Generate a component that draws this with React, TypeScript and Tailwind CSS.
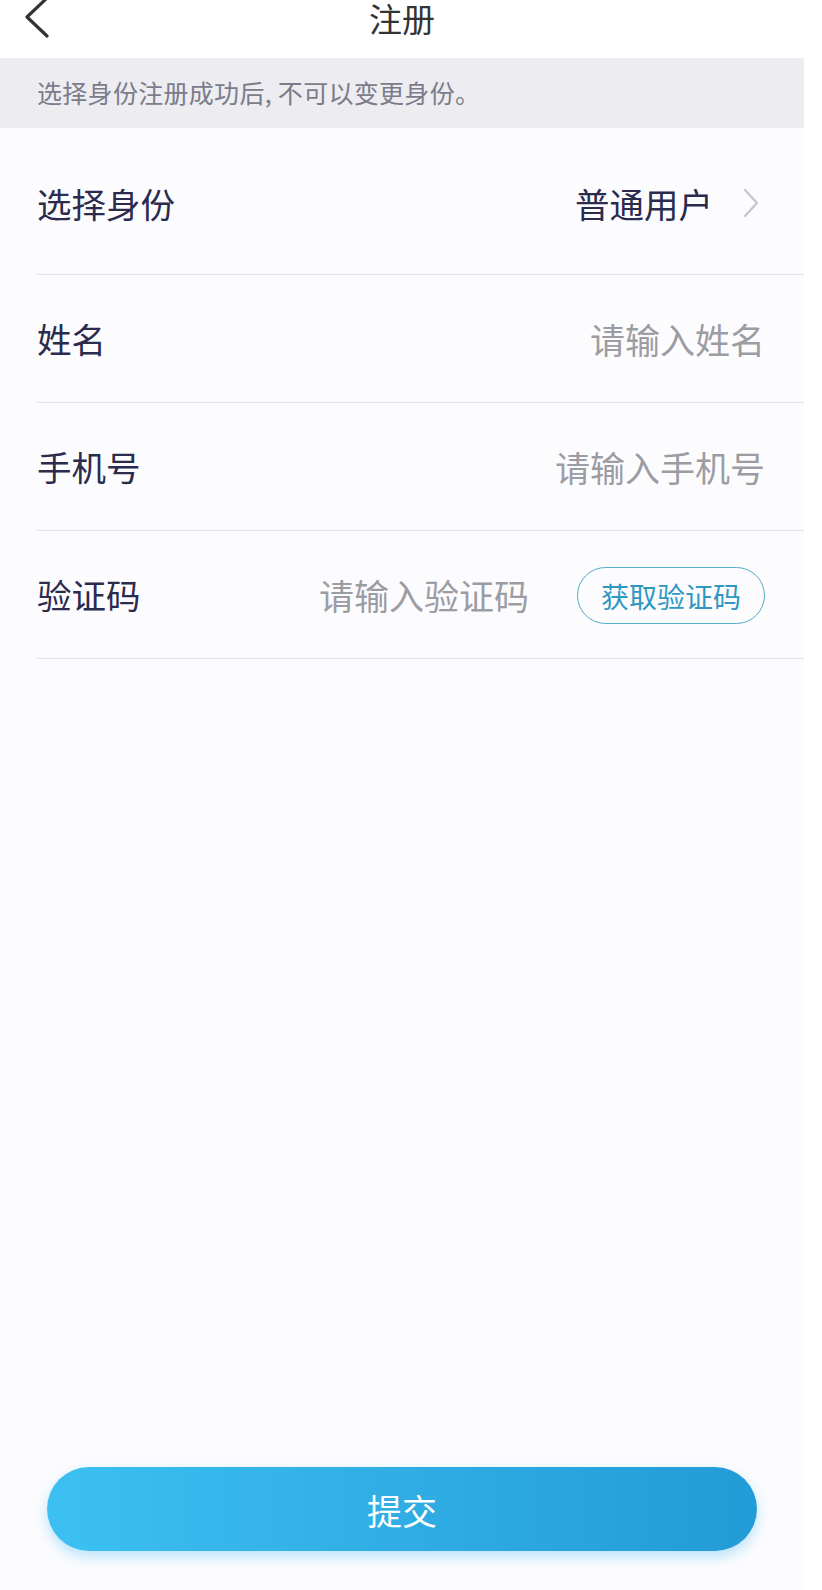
import React from "react";

const font = { fontFamily: '"Noto Sans CJK SC", "Noto Sans", sans-serif' };

function Row({ label, children, tall }: { label: string; children: React.ReactNode; tall?: boolean }) {
  return (
    <div className={`flex items-center border-b border-[#e3e3e8] pr-[39px] ${tall ? "h-[147px] pt-[4px]" : "h-[128px]"}`}>
      <div className="text-[34.5px] text-[#2b2b4d] leading-none">{label}</div>
      <div className="flex-1 flex items-center justify-end">{children}</div>
    </div>
  );
}

export default function App() {
  return (
    <div className="w-[822px] h-[1590px] flex bg-white" style={font}>
      <div className="w-[804px] h-full flex flex-col bg-[#fcfcfe]">
        <div className="h-[58px] bg-white flex items-start">
          <div className="w-[60px] flex justify-end pr-[6px]">
            <svg width="30" height="44" viewBox="0 0 30 44" className="-mt-[5px]">
              <polyline points="23,3 3,22 23,41" fill="none" stroke="#333333" strokeWidth="3.2" strokeLinecap="round" strokeLinejoin="round" />
            </svg>
          </div>
          <div className="flex-1 text-center text-[33px] leading-[37px] text-[#333333] pr-[60px]">注册</div>
        </div>
        <div className="h-[70px] bg-[#ececf1] flex items-center pl-[37px] text-[25px] text-[#7b7b89] tracking-[0.3px]">
          选择身份注册成功后, 不可以变更身份。
        </div>
        <div className="pl-[37px]">
          <Row label="选择身份" tall>
            <span className="text-[34.5px] text-[#2b2b4d] leading-none">普通用户</span>
            <svg width="18" height="30" viewBox="0 0 18 30" className="ml-[29px] mr-[5px]">
              <polyline points="3,2 15,15 3,28" fill="none" stroke="#c5c5ca" strokeWidth="2.2" strokeLinecap="round" strokeLinejoin="round" />
            </svg>
          </Row>
          <Row label="姓名">
            <span className="text-[35px] text-[#9c9ca3] leading-none">请输入姓名</span>
          </Row>
          <Row label="手机号">
            <span className="text-[35px] text-[#9c9ca3] leading-none">请输入手机号</span>
          </Row>
          <Row label="验证码">
            <span className="text-[35px] text-[#9c9ca3] leading-none mr-[48px]">请输入验证码</span>
            <button className="w-[188px] h-[57px] mt-[2px] rounded-full border border-[#56abc8] text-[28px] text-[#2f98c2] leading-none flex items-center justify-center">
              获取验证码
            </button>
          </Row>
        </div>
        <div className="flex-1" />
        <div className="px-[47px] pb-[39px]">
          <button className="w-full h-[84px] rounded-full bg-gradient-to-r from-[#3cc0f2] to-[#239bd6] text-white text-[35px] leading-none flex items-center justify-center shadow-[0_6px_14px_rgba(60,180,240,0.35)]">
            提交
          </button>
        </div>
      </div>
      <div className="flex-1 bg-white" />
    </div>
  );
}
